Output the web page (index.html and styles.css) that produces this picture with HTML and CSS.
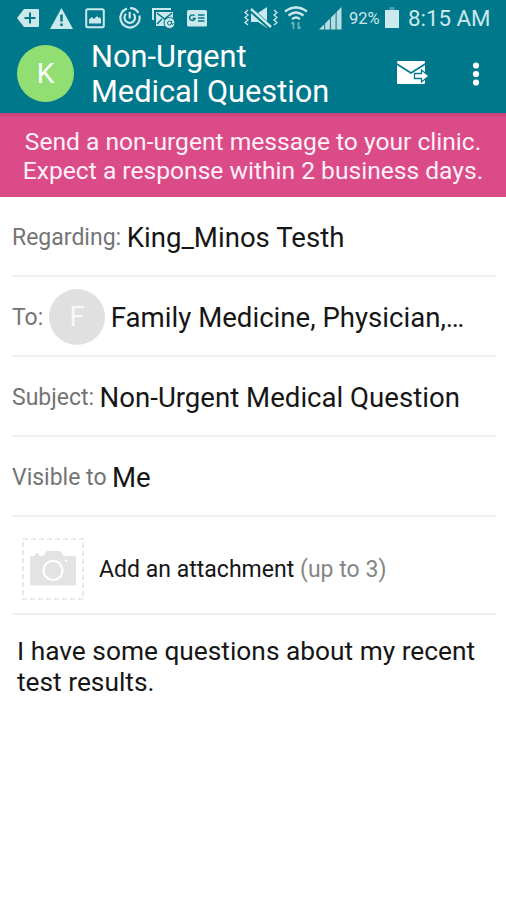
FILE: index.html
```html
<!DOCTYPE html>
<html lang="en">
<head>
<meta charset="utf-8">
<title>Non-Urgent Medical Question</title>
<link rel="stylesheet" href="styles.css">
</head>
<body>
<div class="status">
  <div class="notifications">
    <svg class="icon" viewBox="0 0 24 24"><path fill="currentColor" d="M8 3h14q1 0 1 1v16q0 1-1 1H8L1 12z"/><path d="M14 6.500v11M8.500 12h11" stroke="#00788b" stroke-width="2"/></svg>
    <svg class="icon" viewBox="0 0 24 24"><path fill="currentColor" d="M11.500 2 23 23H0z"/><path d="M11.500 8.500v7M11.500 17.500v2.500" stroke="#00788b" stroke-width="2.500"/></svg>
    <svg class="icon" viewBox="0 0 24 24"><rect x="2.200" y="3.200" width="17.600" height="18" rx="1.500" fill="none" stroke="currentColor" stroke-width="2"/><path fill="currentColor" d="M5 17.500v-4l3-2.500 2 2 3-3 1.500 2 1-1 1.500 2v4.500z"/></svg>
    <svg class="icon" viewBox="0 0 24 24"><g fill="none" stroke="currentColor" stroke-width="2.200"><path d="M9 2.600a9.700 9.700 0 1 0 12.500 7M12 2.200a9.700 9.700 0 0 1 8.500 4.800"/><path d="M8 7.800a5.300 5.300 0 1 0 7.500 0M11.700 6v6.500"/></g></svg>
    <svg class="icon" viewBox="0 0 24 24"><path d="M1 14V3h18" fill="none" stroke="currentColor" stroke-width="2"/><path fill="currentColor" d="M4 6h17v14H4z"/><path d="m5 7 7.500 6L20 7M5 18l5-5" fill="none" stroke="#00788b" stroke-width="1.500"/><circle cx="17.500" cy="17" r="5.500" fill="currentColor" stroke="#00788b"/><circle cx="17.500" cy="17" r="2" fill="none" stroke="#00788b"/><path d="M19.500 15v3q1.500 1 2-1" fill="none" stroke="#00788b"/></svg>
    <svg class="icon" viewBox="0 0 24 24"><rect x="1" y="4" width="20" height="16.500" rx="1.500" fill="currentColor"/><path d="M8.500 9.800a2.800 2.800 0 1 0 .6 2.700H6.500M12 9h6.500M12 12h6.500M12 15h6.500" fill="none" stroke="#00788b" stroke-width="1.400"/></svg>
  </div>
  <div class="system">
    <svg class="mute" viewBox="0 0 34 24"><path fill="currentColor" d="M7 7h7l9-6v21l-9-6H7z"/><path d="m6 3 21 19" stroke="#00788b" stroke-width="5"/><path d="m7 3 20 18" stroke="currentColor" stroke-width="2.400"/><path d="m4 4-3 2.500 3 2.500-3 2.500 3 2.500-3 2.500 3 2.500M30 4l3 2.500-3 2.500 3 2.500-3 2.500 3 2.500-3 2.500" fill="none" stroke="currentColor" stroke-width="1.400"/></svg>
    <svg class="icon wifi" viewBox="0 0 24 24"><g fill="none" stroke="currentColor" stroke-width="2.400"><path d="M1 5.500Q12-2.500 23 5.500M4.500 9.500q7.500-6 15 0M8 13.200q4-3.500 8 0"/></g><path d="M9.500 23v-7m-2 2 2-2M14.500 16v7m2-2-2 2" fill="none" stroke="#75b5bf" stroke-width="1.700"/></svg>
    <svg class="icon signal" viewBox="0 0 24 24"><path fill="currentColor" opacity=".9" d="M0 23.500 22.500 1v22.500z"/><path d="M5.700 15v9M11.400 9v15M17.100 4v20" stroke="#00788b" stroke-width="1"/></svg>
    <span class="percent">92%</span>
    <svg class="battery" viewBox="0 0 16 24"><path fill="currentColor" d="M1 4h14v18H1z"/><path fill="#4b9eac" d="M5.500 1h5v3h-5z"/></svg>
    <span class="clock">8:15 AM</span>
  </div>
</div>
<header class="appbar">
  <div class="avatar green">K</div>
  <h1 class="title">Non-Urgent<br>Medical Question</h1>
  <svg class="send" viewBox="0 0 34 26"><path fill="#fff" d="M2 1h26q1 0 1 1v21q0 1-1 1H2q-1 0-1-1V2q0-1 1-1z"/><path d="m0 3.500 15 9.500L30 3.500" fill="none" stroke="#00788b" stroke-width="1.700"/><path d="M18.500 13.500h7v-3.500l7.500 6-7.500 6v-3.500h-7z" fill="#fff" stroke="#00788b" stroke-width="1.300"/></svg>
  <svg class="more" viewBox="0 0 8 24"><g fill="#fff"><circle cx="4" cy="3.500" r="3.100"/><circle cx="4" cy="12" r="3.100"/><circle cx="4" cy="20.500" r="3.100"/></g></svg>
</header>
<div class="banner"><span>Send a non-urgent message to your clinic.</span><span>Expect a response within 2 business days.</span></div>
<main class="form">
  <div class="row"><span class="label">Regarding:</span><span class="value">King_Minos Testh</span></div>
  <div class="row"><span class="label">To:</span><div class="avatar grey">F</div><span class="value">Family Medicine, Physician,…</span></div>
  <div class="row"><span class="label">Subject:</span><span class="value">Non-Urgent Medical Question</span></div>
  <div class="row"><span class="label">Visible to</span><span class="value">Me</span></div>
  <div class="row attach">
    <svg class="camera" viewBox="0 0 62 62"><rect x="1" y="1" width="60" height="60" fill="none" stroke="#e3e3e3" stroke-width="1.600" stroke-dasharray="5 3"/><path fill="#e3e3e3" d="M13 15.500h4V18h4l4-5h13l4 5h10q2 0 2 2v25.500q0 2-2 2H10q-2 0-2-2V20q0-2 2-2h3z"/><circle cx="31" cy="32.500" r="9.500" fill="none" stroke="#fff" stroke-width="2.200"/><circle cx="44" cy="22.500" r="1.200" fill="#fff"/></svg>
    <span class="attach-text">Add an attachment <span class="hint">(up to 3)</span></span>
  </div>
  <p class="message">I have some questions about my recent<br>test results.</p>
</main>
</body>
</html>
```
FILE: styles.css
```css
* { box-sizing: border-box; }
body {
  margin: 0;
  width: 506px;
  height: 900px;
  overflow: hidden;
  background: #fff;
  color: #161616;
  font-family: Roboto, "Liberation Sans", sans-serif;
}
svg { display: block; flex: none; }
.status {
  display: flex;
  justify-content: space-between;
  height: 36px;
  padding: 0 16px;
  background: #00788b;
  color: #cbe8ec;
}
.notifications, .system { display: flex; align-items: center; }
.notifications { gap: 10px; }
.icon { width: 24px; height: 24px; }
.mute { width: 34px; height: 24px; }
.wifi { margin-left: 6px; }
.signal { margin-left: 11px; }
.percent { width: 31px; margin-left: 6px; font-size: 16.500px; white-space: nowrap; }
.battery { width: 16px; height: 24px; margin-left: 4px; }
.clock { width: 82px; margin-left: 8px; font-size: 22.300px; white-space: nowrap; }
.appbar {
  display: flex;
  align-items: center;
  height: 77px;
  padding: 0 26px 0 17px;
  background: #00788b;
  color: #fff;
}
.avatar {
  display: flex;
  align-items: center;
  justify-content: center;
  flex: none;
  width: 56px;
  height: 56px;
  border-radius: 50%;
  color: #fff;
  font-size: 28px;
}
.appbar .avatar { width: 57px; height: 57px; margin-top: -2px; }
.green { background: #91df73; }
.grey { background: #e0e0e0; color: #f8f8f8; margin: 1px 6px 0; }
.title {
  flex: 1;
  margin: -1px 0 0 17px;
  font-size: 30.750px;
  font-weight: 400;
  line-height: 35px;
  white-space: nowrap;
}
.send { width: 34px; height: 26px; margin: -3px 42px 0 0; }
.more { width: 8px; height: 24px; margin-top: -2px; }
.banner {
  display: flex;
  flex-direction: column;
  align-items: center;
  height: 84px;
  padding-top: 15px;
  background: linear-gradient(#c64078, #db4b87 5px);
  color: #fff0f7;
  font-size: 24.600px;
  line-height: 28.500px;
  white-space: nowrap;
}
.form { padding: 0 10px 0 12px; }
.row {
  display: flex;
  align-items: center;
  height: 80px;
  border-bottom: 2px solid #efefef;
  white-space: nowrap;
}
.label { margin-top: 3px; color: #747474; font-size: 23px; }
.value { margin: 2px 0 0 5.500px; font-size: 27.600px; }
.grey + .value { margin-left: -0.500px; }
.attach { height: 98px; padding-left: 10px; }
.camera { width: 62px; height: 62px; margin-top: 8px; }
.attach-text { margin: 8px 0 0 15px; font-size: 23px; letter-spacing: 0.020px; }
.hint { color: #858585; }
.message { margin: 21px 0 0 5px; font-size: 26.300px; line-height: 31px; white-space: nowrap; }
```
